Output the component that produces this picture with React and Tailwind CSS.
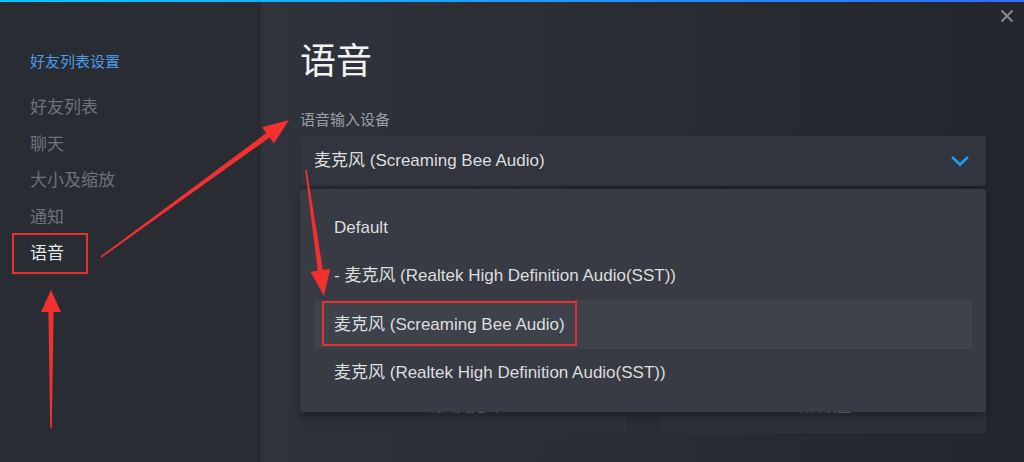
import React from 'react';

const FONT = { fontFamily: 'Arial, "Liberation Sans", "Noto Sans CJK SC", sans-serif' };

// red annotation arrow as one polygon, from tail to tip
const arrowPoints = (x1, y1, x2, y2, head = 24, headW = 11, shaft = 3) => {
  const dx = x2 - x1;
  const dy = y2 - y1;
  const len = Math.hypot(dx, dy);
  const ux = dx / len;
  const uy = dy / len;
  const nx = -uy;
  const ny = ux;
  const bx = x2 - ux * head;
  const by = y2 - uy * head;
  const pts = [
    [x1 + nx * 0.8, y1 + ny * 0.8],
    [bx + nx * shaft, by + ny * shaft],
    [bx + nx * headW, by + ny * headW],
    [x2, y2],
    [bx - nx * headW, by - ny * headW],
    [bx - nx * shaft, by - ny * shaft],
    [x1 - nx * 0.8, y1 - ny * 0.8],
  ];
  return pts.map((p) => p.join(',')).join(' ');
};

const menuItems = [
  'Default',
  '- 麦克风 (Realtek High Definition Audio(SST))',
  '麦克风 (Screaming Bee Audio)',
  '麦克风 (Realtek High Definition Audio(SST))',
];

export default function App() {
  return (
    <div className="relative w-[1024px] h-[462px] overflow-hidden flex flex-col bg-[#26292f]" style={FONT}>
      <div className="h-[2px] shrink-0 bg-gradient-to-r from-[#00c8ff] to-[#2f6bff]" />

      <div className="flex flex-1">
        {/* sidebar */}
        <div className="w-[261px] shrink-0 bg-[#292c33] pl-[30px] pt-[50px]">
          <div className="text-[15px] leading-[20px] text-[#4b9be6] mb-[18px]">好友列表设置</div>
          <div className="flex flex-col text-[17px] leading-[36.5px] text-[#6e7278]">
            <span>好友列表</span>
            <span>聊天</span>
            <span>大小及缩放</span>
            <span>通知</span>
            <span className="text-[#e6e8ea]">语音</span>
          </div>
        </div>

        {/* main */}
        <div className="flex-1 relative bg-gradient-to-r from-[#30333b] to-[#23262c] pl-[39px] pr-[38px] pt-[38px]">
          <div className="text-[36px] leading-[44px] text-[#f2f3f4]">语音</div>
          <div className="mt-[26px] text-[15px] leading-[20px] text-[#9a9ea4]">语音输入设备</div>
          <div className="mt-[6px] h-[50px] rounded-[3px] bg-[#32353d] shadow-[0_2px_3px_rgba(0,0,0,0.25)] flex items-center justify-between pl-[14px] pr-[16px]">
            <span className="text-[17px] text-[#dcdedf]">麦克风 (Screaming Bee Audio)</span>
            <svg width="20" height="12" viewBox="0 0 20 12" fill="none">
              <path d="M2 2 L10 9.5 L18 2" stroke="#1a9fff" strokeWidth="2.4" />
            </svg>
          </div>

          <div className="mt-[203px] flex gap-[34px]">
            <div className="w-[326px] h-[44px] rounded-[3px] bg-[#2e3139] flex justify-center pt-[7px] text-[14px] text-[#7c8086]">
              测试麦克风
            </div>
            <div className="w-[326px] h-[44px] rounded-[3px] bg-[#2e3139] flex justify-center pt-[7px] text-[14px] text-[#7c8086]">
              语音设置
            </div>
          </div>

          {/* open dropdown menu */}
          <div className="absolute left-[39px] top-[187px] w-[686px] rounded-[3px] bg-[#383b44] shadow-[0_4px_10px_rgba(0,0,0,0.35)] px-[14px] pt-[14px] pb-[15px]">
            {menuItems.map((item, i) => (
              <div
                key={i}
                className={`h-[48.5px] flex items-center pl-[20px] text-[17px] text-[#dcdedf] ${i === 2 ? 'bg-[#3e424b]' : ''}`}
              >
                {item}
              </div>
            ))}
          </div>
        </div>
      </div>

      {/* close */}
      <svg className="absolute left-[1000px] top-[9px]" width="14" height="14" viewBox="0 0 14 14">
        <path d="M1.5 1.5 L12.5 12.5 M12.5 1.5 L1.5 12.5" stroke="#8b9096" strokeWidth="1.8" />
      </svg>

      {/* annotations */}
      <div className="absolute left-[12px] top-[233px] w-[76px] h-[41px] border-2 border-[#e8302f]" />
      <div className="absolute left-[322px] top-[301px] w-[255px] h-[45px] border-2 border-[#e8302f]" />
      <svg className="absolute left-0 top-0 pointer-events-none" width="1024" height="462">
        <polygon points={arrowPoints(51, 428, 51, 290, 22, 10, 2.6)} fill="#f1302f" />
        <polygon points={arrowPoints(101, 257, 289, 120, 26, 10, 2.8)} fill="#f1302f" />
        <polygon points={arrowPoints(306, 170, 324, 296, 26, 10, 2.6)} fill="#f1302f" />
      </svg>
    </div>
  );
}
